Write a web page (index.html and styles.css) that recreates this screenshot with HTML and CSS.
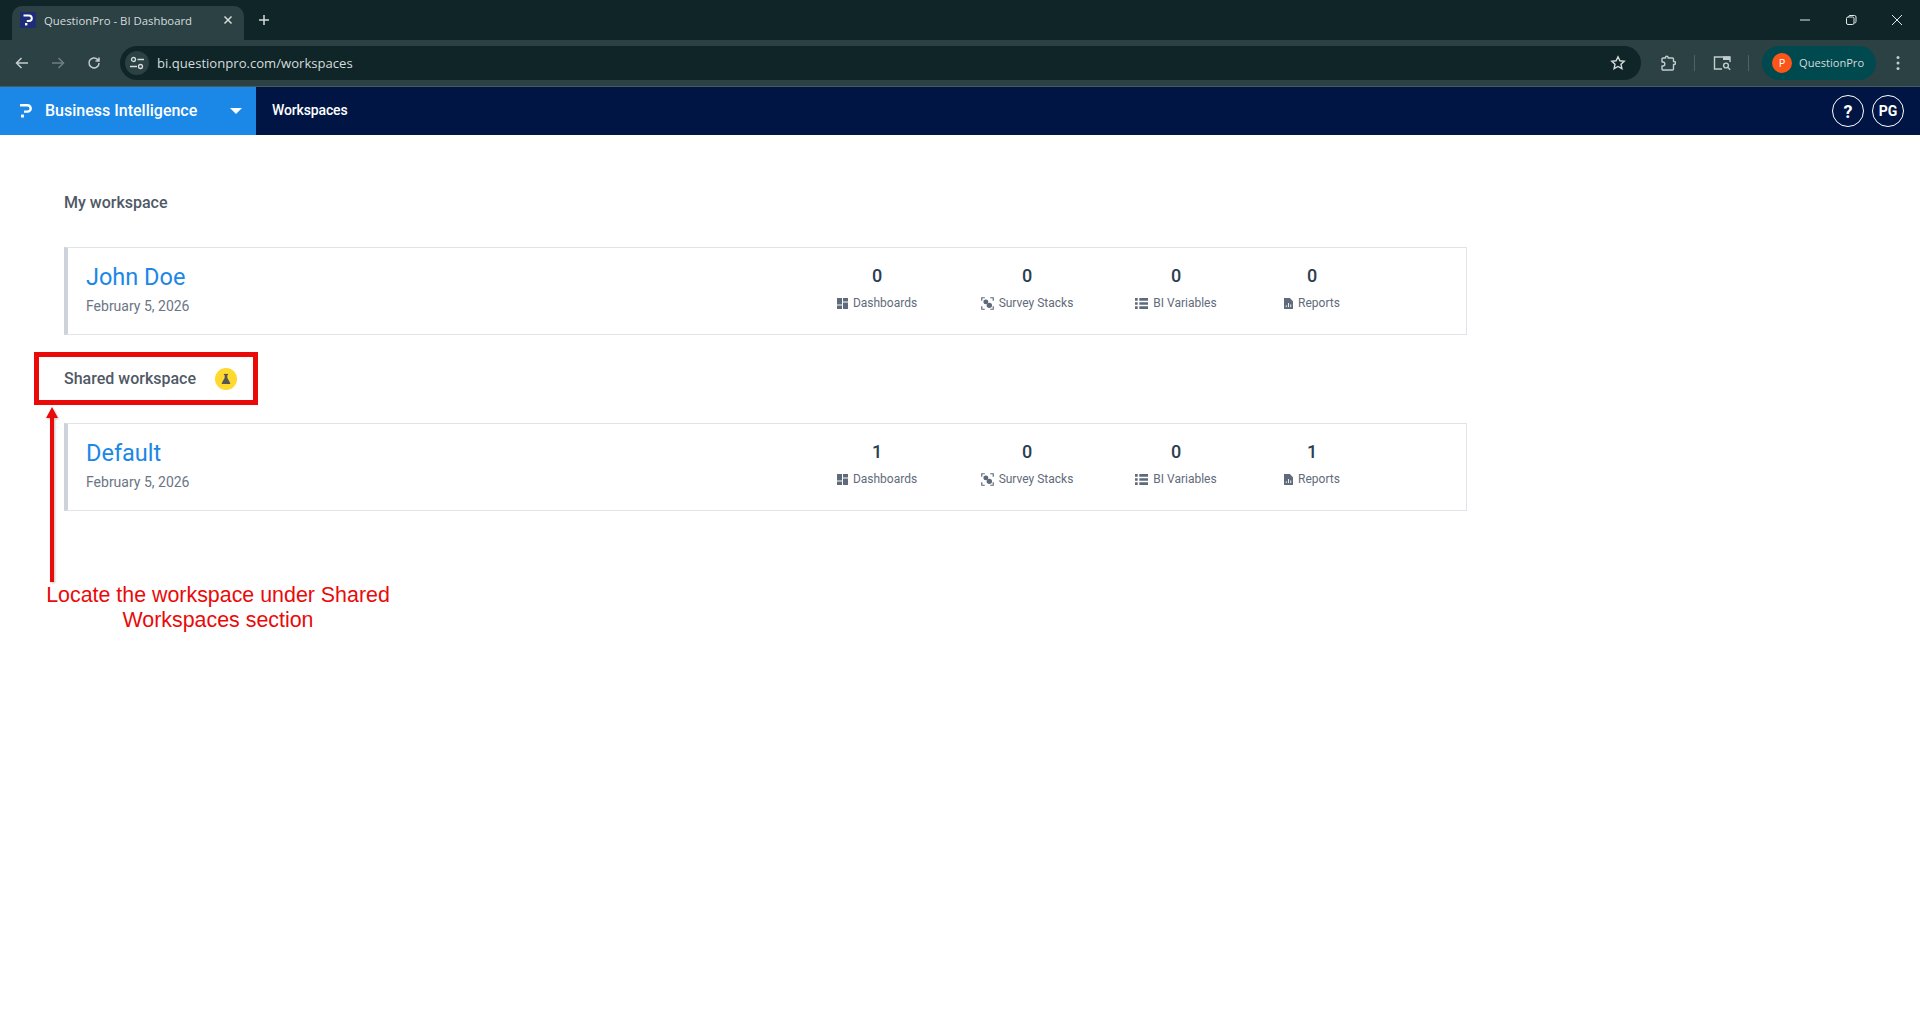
FILE: index.html
```html
<!DOCTYPE html>
<html lang="en">
<head>
<meta charset="utf-8">
<title>QuestionPro - BI Dashboard</title>
<link rel="stylesheet" href="styles.css">
</head>
<body>
<div class="browser">
  <div class="tabstrip">
    <div class="tab">
      <span class="favicon"><svg viewBox="0 0 16 16" width="16" height="16"><path d="M3.500 3.500h5.500a2.800 2.800 0 0 1 0 5.600H6.800" fill="none" stroke="#fff" stroke-width="2"/><rect x="5" y="11" width="2.400" height="2.400" fill="#fff"/></svg></span>
      <span class="tab-title">QuestionPro - BI Dashboard</span>
      <svg class="tab-close" viewBox="0 0 10 10" width="10" height="10"><path d="M1.500 1.500l7 7M8.500 1.500l-7 7" stroke="#d5dcdc" stroke-width="1.500"/></svg>
    </div>
    <svg class="new-tab" viewBox="0 0 12 12" width="12" height="12"><path d="M6 1v10M1 6h10" stroke="#d5dcdc" stroke-width="1.500"/></svg>
    <div class="win-controls">
      <svg viewBox="0 0 12 12" width="12" height="12"><path d="M1 6h10" stroke="#e4e8e8" stroke-width="1"/></svg>
      <svg viewBox="0 0 12 12" width="12" height="12"><rect x="1.500" y="3" width="7.500" height="7.500" rx="1.500" fill="none" stroke="#e4e8e8"/><path d="M3.500 3V2.800A1.500 1.500 0 0 1 5 1.500h4.500A1.500 1.500 0 0 1 11 3v4.500A1.500 1.500 0 0 1 9.500 9" fill="none" stroke="#e4e8e8"/></svg>
      <svg viewBox="0 0 12 12" width="12" height="12"><path d="M1 1l10 10M11 1L1 11" stroke="#e4e8e8" stroke-width="1"/></svg>
    </div>
  </div>
  <div class="toolbar">
    <svg class="tool" viewBox="0 0 16 16" width="16" height="16"><path d="M14 8H3M7.500 3L2.500 8l5 5" fill="none" stroke="#c4cdcd" stroke-width="1.500"/></svg>
    <svg class="tool" viewBox="0 0 16 16" width="16" height="16"><path d="M2 8h11M8.500 3l5 5-5 5" fill="none" stroke="#6f7f7f" stroke-width="1.500"/></svg>
    <svg class="tool" viewBox="0 0 16 16" width="16" height="16"><path d="M13 8a5 5 0 1 1-1.500-3.600L13 5.800M13 2.500v3.500H9.500" fill="none" stroke="#c4cdcd" stroke-width="1.500"/></svg>
    <div class="omnibox">
      <span class="site-icon"><svg viewBox="0 0 16 16" width="16" height="16"><circle cx="4.500" cy="4.500" r="2" fill="none" stroke="#d5dcdc" stroke-width="1.300"/><path d="M8.500 4.500H15M1 11.500h7" stroke="#d5dcdc" stroke-width="1.300"/><circle cx="11.500" cy="11.500" r="2" fill="none" stroke="#d5dcdc" stroke-width="1.300"/></svg></span>
      <span class="url">bi.questionpro.com/workspaces</span>
      <svg class="star" viewBox="0 0 16 16" width="16" height="16"><path d="M8 1.800l1.900 4 4.300.5-3.200 3 .9 4.300L8 11.500l-3.900 2.100.9-4.300-3.200-3 4.300-.5z" fill="none" stroke="#d5dcdc" stroke-width="1.400"/></svg>
    </div>
    <svg class="tool ext" viewBox="0 0 16 16" width="16" height="16"><path d="M3 3h2.500V2.500a1.300 1.300 0 0 1 2.600 0V3h4.400a1 1 0 0 1 1 1v2.500h.5a1.500 1.500 0 0 1 0 3h-.5V14a1 1 0 0 1-1 1H3a1 1 0 0 1-1-1v-3h.8a2 2 0 0 0 0-4H2V4a1 1 0 0 1 1-1z" fill="none" stroke="#c4cdcd" stroke-width="1.400" stroke-linejoin="round"/></svg>
    <span class="sep"></span>
    <svg class="tool lens" viewBox="0 0 18 16" width="18" height="16"><path d="M9 14H1.500V2H17v5" fill="none" stroke="#c4cdcd" stroke-width="1.400"/><rect x="10" y="1.500" width="7" height="3.500" fill="#c4cdcd"/><circle cx="13" cy="10.500" r="2.400" fill="none" stroke="#c4cdcd" stroke-width="1.400"/><path d="M15 12.500l2.200 2.200" stroke="#c4cdcd" stroke-width="1.400"/></svg>
    <span class="sep last"></span>
    <div class="profile"><span class="avatar">P</span><span class="profile-name">QuestionPro</span></div>
    <svg class="tool" viewBox="0 0 4 16" width="4" height="16"><circle cx="2" cy="2.500" r="1.500" fill="#c4cdcd"/><circle cx="2" cy="8" r="1.500" fill="#c4cdcd"/><circle cx="2" cy="13.500" r="1.500" fill="#c4cdcd"/></svg>
  </div>
</div>

<nav class="topnav">
  <div class="brand">
    <svg class="brand-logo" viewBox="0 0 12 14" width="12" height="14"><path d="M0 1.200h7.500a3.200 3.200 0 0 1 0 6.400H4" fill="none" stroke="#fff" stroke-width="2.400"/><rect x="1" y="10.600" width="3" height="3" rx="0.600" fill="#fff"/></svg>
    <span class="brand-name">Business Intelligence</span>
    <span class="caret"></span>
  </div>
  <a class="nav-link">Workspaces</a>
  <div class="nav-right">
    <span class="round-btn help">?</span>
    <span class="round-btn">PG</span>
  </div>
</nav>

<main class="content">
  <h2 class="section-title first">My workspace</h2>
  <section class="card">
    <div class="card-id">
      <a class="card-name">John Doe</a>
      <div class="card-date">February 5, 2026</div>
    </div>
    <div class="stats">
      <div class="stat"><div class="stat-num">0</div><div class="stat-label"><svg viewBox="0 0 11 11" width="11" height="11"><path d="M0 0h5v6.500H0zM6 0h5v3.500H6zM6 4.500h5V11H6zM0 7.500h5V11H0z" fill="#5f6b7a"/></svg>Dashboards</div></div>
      <div class="stat"><div class="stat-num">0</div><div class="stat-label"><svg viewBox="0 0 12 12" width="13" height="13"><path d="M.7 3.500V.7h2.800M8.500.7h2.800v2.800M11.300 8.500v2.800H8.500M3.500 11.300H.7V8.500" fill="none" stroke="#5f6b7a" stroke-width="1.100"/><circle cx="4.500" cy="4.500" r="2.300" fill="#5f6b7a"/><circle cx="7.700" cy="7.700" r="2.500" fill="#5f6b7a"/></svg>Survey Stacks</div></div>
      <div class="stat"><div class="stat-num">0</div><div class="stat-label"><svg viewBox="0 0 12 12" width="13" height="13"><path d="M0 1h2.500v2.400H0zM4 1h8v2.400H4zM0 4.800h2.500v2.400H0zM4 4.800h8v2.400H4zM0 8.600h2.500V11H0zM4 8.600h8V11H4z" fill="#5f6b7a"/></svg>BI Variables</div></div>
      <div class="stat"><div class="stat-num">0</div><div class="stat-label"><svg viewBox="0 0 10 12" width="9" height="11"><path d="M0 0h6.500L10 3.500V12H0z" fill="#5f6b7a"/><path d="M2.500 10V8M5 10V5.500M7.500 10V7" stroke="#fff" stroke-width="1"/></svg>Reports</div></div>
    </div>
  </section>

  <h2 class="section-title second">Shared workspace
    <span class="lab-badge"><svg viewBox="0 0 12 12" width="12" height="12"><path d="M4.700 1.500h2.600v3.200L10.200 10a.7.7 0 0 1-.6 1H2.400a.7.7 0 0 1-.6-1l2.900-5.300z" fill="#555"/><path d="M3.900 1.500h4.200" stroke="#555" stroke-width="1.200"/></svg></span>
  </h2>
  <section class="card">
    <div class="card-id">
      <a class="card-name">Default</a>
      <div class="card-date">February 5, 2026</div>
    </div>
    <div class="stats">
      <div class="stat"><div class="stat-num">1</div><div class="stat-label"><svg viewBox="0 0 11 11" width="11" height="11"><path d="M0 0h5v6.500H0zM6 0h5v3.500H6zM6 4.500h5V11H6zM0 7.500h5V11H0z" fill="#5f6b7a"/></svg>Dashboards</div></div>
      <div class="stat"><div class="stat-num">0</div><div class="stat-label"><svg viewBox="0 0 12 12" width="13" height="13"><path d="M.7 3.500V.7h2.800M8.500.7h2.800v2.800M11.300 8.500v2.800H8.500M3.500 11.300H.7V8.500" fill="none" stroke="#5f6b7a" stroke-width="1.100"/><circle cx="4.500" cy="4.500" r="2.300" fill="#5f6b7a"/><circle cx="7.700" cy="7.700" r="2.500" fill="#5f6b7a"/></svg>Survey Stacks</div></div>
      <div class="stat"><div class="stat-num">0</div><div class="stat-label"><svg viewBox="0 0 12 12" width="13" height="13"><path d="M0 1h2.500v2.400H0zM4 1h8v2.400H4zM0 4.800h2.500v2.400H0zM4 4.800h8v2.400H4zM0 8.600h2.500V11H0zM4 8.600h8V11H4z" fill="#5f6b7a"/></svg>BI Variables</div></div>
      <div class="stat"><div class="stat-num">1</div><div class="stat-label"><svg viewBox="0 0 10 12" width="9" height="11"><path d="M0 0h6.500L10 3.500V12H0z" fill="#5f6b7a"/><path d="M2.500 10V8M5 10V5.500M7.500 10V7" stroke="#fff" stroke-width="1"/></svg>Reports</div></div>
    </div>
  </section>
</main>

<div class="callout-box"></div>
<svg class="callout-arrow" viewBox="0 0 14 176" width="14" height="176"><path d="M7 0L13 11H9V175H5V11H1z" fill="#ea0a0a"/></svg>
<p class="callout-text">Locate the workspace under Shared Workspaces section</p>
</body>
</html>
```

FILE: styles.css
```css
* { box-sizing: border-box; }
html, body { margin: 0; padding: 0; height: 100%; }
body {
  position: relative;
  background: #fff;
  font-family: "Roboto", "Noto Sans", sans-serif;
  overflow: hidden;
}
.browser { background: #0f2527; font-family: "Open Sans", "Noto Sans", sans-serif; }
.tabstrip { height: 40px; display: flex; align-items: flex-end; padding-left: 12px; }
.tab {
  width: 232px; height: 34px; background: #2b4144; border-radius: 10px 10px 0 0;
  display: flex; align-items: center; padding: 0 11px 6px 8px; gap: 8px;
}
.favicon {
  width: 16px; height: 16px; background: #1d2d78; display: flex; flex: none;
}
.tab-title { flex: 1; color: #d5dcdc; font-size: 11.350px; white-space: nowrap; }
.new-tab { align-self: center; margin: 0 0 0 14px; }
.win-controls { margin-left: auto; align-self: center; display: flex; gap: 34px; padding-right: 17px; }
.toolbar {
  height: 47px; background: #2b4144; display: flex; align-items: center;
  padding: 0 20px 1px 14px; border-bottom: 1px solid #4a5b5d;
}
.tool { flex: none; margin-right: 20px; }
.toolbar .tool:nth-child(3) { margin-right: 18px; }
.omnibox {
  flex: 1; height: 34px; border-radius: 17px; background: #0f2527;
  display: flex; align-items: center; padding: 0 15px 0 5px; margin-right: 19px;
}
.site-icon {
  width: 24px; height: 24px; border-radius: 50%; background: #2b4144;
  display: flex; align-items: center; justify-content: center; margin-right: 8px;
}
.url { flex: 1; color: #d5dcdc; font-size: 13.100px; }
.tool.ext { margin-right: 18px; }
.tool.lens { margin-right: 17px; }
.sep { width: 1px; height: 16px; background: #4f6265; margin-right: 18px; flex: none; }
.sep.last { margin-right: 13px; }
.profile {
  width: 114px; height: 34px; border-radius: 17px; background: #00494f; margin-right: 20px; flex: none;
  display: flex; align-items: center; padding-left: 10px; gap: 7px;
}
.profile ~ .tool { margin-right: 0; margin-left: 0; }
.avatar {
  width: 20px; height: 20px; border-radius: 50%; background: #fd5519; color: #fff;
  font-size: 11px; display: flex; align-items: center; justify-content: center;
}
.profile-name { color: #d5dcdc; font-size: 11.100px; }

.topnav { height: 48px; background: #001544; display: flex; align-items: stretch; color: #fff; }
.brand {
  width: 256px; background: #1b87e6; display: flex; align-items: center; padding-left: 20px; flex: none;
}
.brand-name { font-size: 16px; font-weight: 500; margin-left: 13px; flex: 1; white-space: nowrap; padding-bottom: 2px; }
.caret {
  width: 0; height: 0; border-left: 6px solid transparent; border-right: 6px solid transparent;
  border-top: 6px solid #fff; margin-right: 14px;
}
.nav-link { font-size: 14px; font-weight: 500; align-self: center; margin-left: 16px; padding-bottom: 2px; letter-spacing: -0.010em; }
.nav-right { margin-left: auto; display: flex; gap: 8px; align-items: center; padding-right: 16px; }
.round-btn {
  width: 32px; height: 32px; border: 1.500px solid #fff; border-radius: 50%;
  display: flex; align-items: center; justify-content: center; font-weight: 700; font-size: 14px;
}
.round-btn.help { font-size: 18px; }

.content { padding: 0 453px 0 64px; }
.section-title {
  margin: 0; font-size: 16px; line-height: 24px; font-weight: 500; color: #4f5966;
  display: flex; align-items: center;
}
.section-title.first { height: 112px; padding: 54px 0 31px; }
.section-title.second { height: 88px; padding: 0 0 1px; }
.lab-badge {
  width: 22px; height: 22px; border-radius: 50%; background: #ffd92d;
  display: flex; align-items: center; justify-content: center; margin-left: 19px;
}
.card {
  height: 88px; border: 1px solid #e0e3e8; border-left: 4px solid #ced3db;
  display: flex; padding: 0 0 0 18px;
}
.card-id { width: 716px; flex: none; padding-top: 13px; }
.card-name { display: block; font-size: 23.500px; line-height: 32px; color: #1b87e6; }
.card-date { font-size: 14px; line-height: 20px; color: #6b7585; margin-top: 3px; }
.stats { display: grid; grid-template-columns: 150px 150px 148px 124px; }
.stat { text-align: center; padding-top: 15px; }
.stat-num { font-size: 18px; line-height: 26px; font-weight: 500; color: #2c3e50; }
.stat-label {
  font-size: 12px; line-height: 16px; color: #5f6b7a; margin-top: 6px;
  display: flex; align-items: center; justify-content: center; gap: 5px;
}

.callout-box {
  position: absolute; left: 34px; top: 352px; width: 224px; height: 53px; border: 5px solid #ea0a0a;
}
.callout-arrow { position: absolute; left: 45px; top: 407px; filter: drop-shadow(1px 1px 1px rgba(0,0,0,.25)); }
.callout-text {
  position: absolute; left: 38px; top: 583px; width: 360px; margin: 0; text-align: center;
  font-family: "Liberation Sans", Arial, sans-serif; font-size: 21.400px; line-height: 25px; color: #ea0a0a;
}
```
